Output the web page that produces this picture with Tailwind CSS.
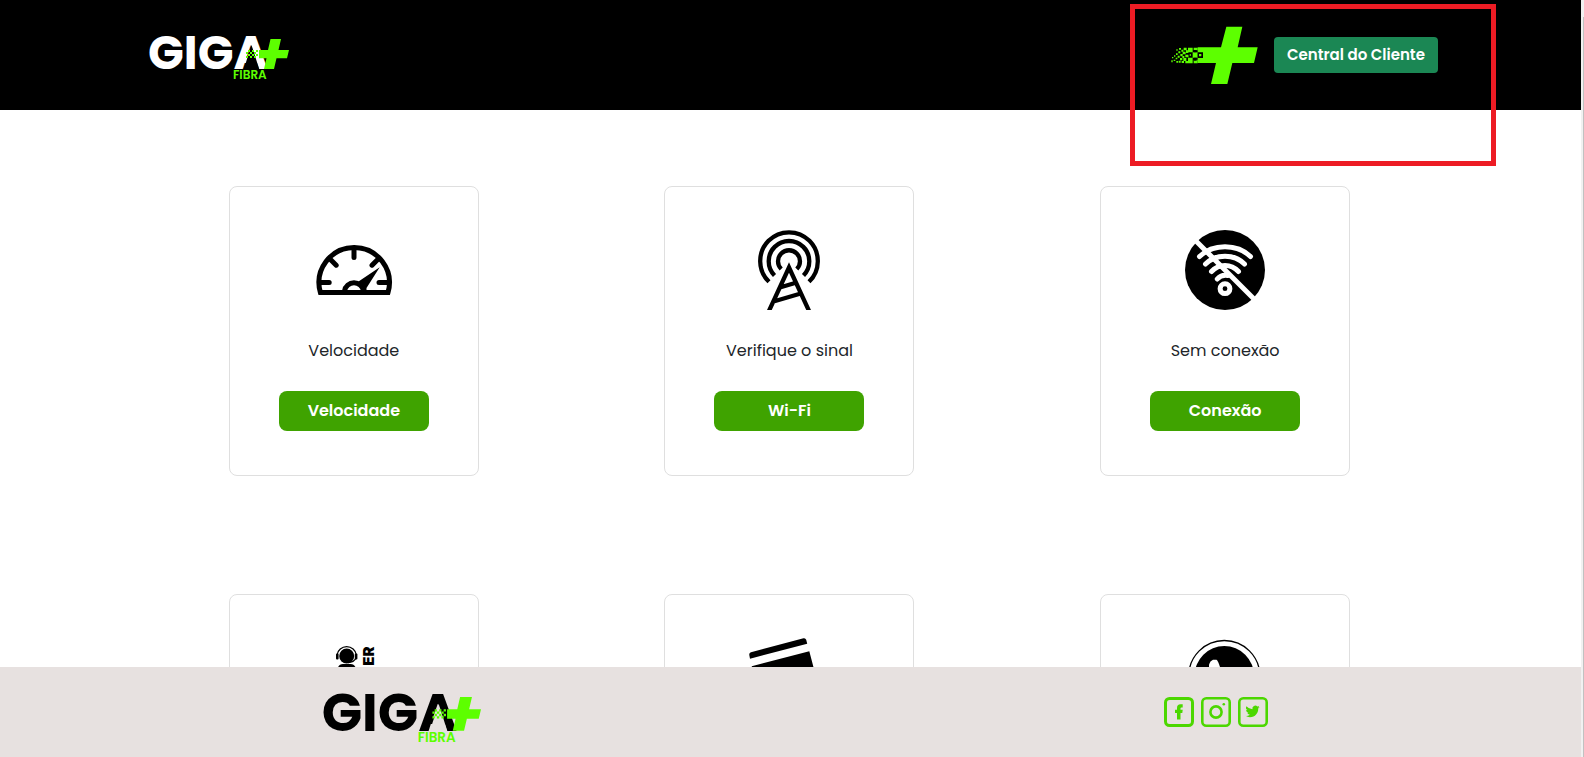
<!DOCTYPE html>
<html lang="pt-BR">
<head>
<meta charset="utf-8">
<meta name="viewport" content="width=device-width, initial-scale=1">
<title>Giga+ Fibra</title>
<script src="https://cdn.jsdelivr.net/npm/@tailwindcss/browser@4"></script>
</head>
<body class="relative flex h-screen overflow-hidden bg-white font-['Poppins','Inter',sans-serif] text-base text-[#212529]">

<!-- Shared logo: lettering in currentColor, A cut-out in the inherited fill -->
<svg class="hidden" aria-hidden="true">
  <symbol id="logo" viewBox="0 0 146 60">
    <text x="5" y="44" font-family="Poppins, Lato, sans-serif" font-weight="700" font-size="47" fill="currentColor">GIGA</text>
    <path d="M108.500 20 100.500 45H116.500Z"/>
    <g fill="#5dff00">
      <path d="M127.500 14H138L135.500 25H146L144 33.300H133.500L131 44H121L123.500 33.300H116V25H125Z"/>
      <path d="M105 25h2v2h-2zM109 25h2v2h-2zM103 27h2v2h-2zM107 27h2v2h-2zM111 27h2v2h-2zM105 29h2v2h-2zM109 29h2v2h-2zM103 31h2v2h-2zM107 31h2v2h-2zM111 31h2v2h-2zM113 25h2v2h-2zM113 29h2v2h-2z"/>
      <text x="90" y="54" font-family="Poppins, Inter, sans-serif" font-weight="600" font-size="12">FIBRA</text>
    </g>
  </symbol>
</svg>

<div class="flex min-w-0 flex-1 flex-col">
  <header class="h-[110px] shrink-0 bg-black">
    <div class="mx-auto flex h-full max-w-[1319px] items-center justify-between px-3">
      <a href="#" aria-label="Giga+ Fibra"><svg class="block h-[60px] w-[146px] fill-black text-white"><use href="#logo"/></svg></a>
      <div class="flex items-center gap-[15px]">
        <svg class="h-[60px] w-[90px]" viewBox="57 30 270 180" aria-hidden="true">
          <path fill="#5dff00" d="M229 35H277L263 97H323L312 144H247L232 207H183L198 144H143V97H213Z"/>
          <path fill="#5dff00" d="M114 98h14v14h-14zM131 98h12v8h-12zM114 128h14v17h-14zM128 112h15v16h-15zM131 134h12v11h-12zM101 98h9v8h-9zM108 106h7v8h-7zM98 110h9v8h-9zM106 119h10v8h-10zM100 129h9v9h-9zM106 138h8v7h-8zM94 104h6v6h-6zM91 117h7v7h-7zM97 123h6v6h-6zM90 129h7v7h-7zM95 138h7v6h-7zM87 99h6v5h-6zM85 109h6v6h-6zM83 122h6v6h-6zM86 137h6v6h-6zM78 115h5v5h-5zM77 128h5v5h-5zM79 138h5v5h-5zM72 121h4v4h-4zM71 134h5v4h-5zM66 126h4v4h-4zM64 136h4v6h-4zM79 103h4v4h-4z"/>
          <path fill="#000" d="M116 115h10v10h-10zM131 105h9v7h-9zM131 128h9v9h-9zM143 112h16v17h-16z"/>
          <path fill="#5dff00" d="M147 117h7v7h-7zM119 118h4v4h-4z"/>
        </svg>
        <button type="button" class="h-9 w-[164px] rounded bg-[#1b8754] text-[15px] font-semibold text-white">Central do Cliente</button>
      </div>
    </div>
  </header>

  <main class="min-h-0 flex-1 overflow-hidden pr-0.5 pt-[76px]">
    <div class="mx-auto grid max-w-[1307px] grid-cols-3 justify-items-center gap-y-[118px]">
      <article class="flex h-[290px] w-[250px] flex-col items-center rounded-lg border border-[#dfdfdf] pt-[43px]">
        <svg class="size-20" viewBox="0 0 80 80" fill="none" stroke="#000" stroke-width="5" aria-hidden="true">
          <path d="M6.400 62.500A35.200 35.200 0 1 1 74 62.500Z"/>
          <path d="M30.500 61a9.600 9.600 0 0 1 19 0"/>
          <path stroke-linecap="round" d="M40 18V27.500M16 29 22.200 35.200M64.200 29 58 35.200M7 52.500H15.200M73 52.500H65"/>
          <path fill="#000" stroke="none" d="M65.700 37.300 44.500 51.500 48 55 49 62H52.500V58Z"/>
        </svg>
        <p class="my-7 leading-[25px]">Velocidade</p>
        <button type="button" class="h-10 w-[150px] rounded-lg bg-[#3fa300] font-semibold text-white">Velocidade</button>
      </article>

      <article class="flex h-[290px] w-[250px] flex-col items-center rounded-lg border border-[#dfdfdf] pt-[43px]">
        <svg class="size-20" viewBox="0 0 80 80" fill="none" stroke="#000" stroke-width="4.300" aria-hidden="true">
          <path d="M20 51.800A28.800 28.800 0 1 1 60 51.800M25.500 45.500A20.300 20.300 0 1 1 54.500 45.500M32.200 39A11 11 0 1 1 47.800 39"/>
          <path d="M19 83 40 37.500 61 83M30 57.700 48.500 52.200M24.500 71.500 53.500 63"/>
        </svg>
        <p class="my-7 leading-[25px]">Verifique o sinal</p>
        <button type="button" class="h-10 w-[150px] rounded-lg bg-[#3fa300] font-semibold text-white">Wi-Fi</button>
      </article>

      <article class="flex h-[290px] w-[250px] flex-col items-center rounded-lg border border-[#dfdfdf] pt-[43px]">
        <svg class="size-20" viewBox="0 0 80 80" fill="none" stroke="#fff" stroke-width="5" stroke-linecap="round" aria-hidden="true">
          <circle cx="40" cy="40" r="40" fill="#000" stroke="none"/>
          <path d="M14.500 26.500C28 13.500 52 13.500 65.500 26.500M20.500 34C31 23.500 49 23.500 59.500 34M26.500 41.500C34 33.500 46 33.500 53.500 41.500M32.300 49C35.500 45 39 44.800 43 45.500"/>
          <path stroke-linecap="butt" d="M10 10 70 70"/>
          <circle cx="40" cy="58.700" r="4.900" fill="#000"/>
        </svg>
        <p class="my-7 leading-[25px]">Sem conexão</p>
        <button type="button" class="h-10 w-[150px] rounded-lg bg-[#3fa300] font-semibold text-white">Conexão</button>
      </article>

      <article class="flex h-[290px] w-[250px] flex-col items-center rounded-lg border border-[#dfdfdf] pt-[43px]">
        <svg class="size-20" viewBox="0 0 80 80" aria-hidden="true">
          <circle cx="32.700" cy="18" r="7.500"/>
          <path fill="none" stroke="#000" stroke-width="1.300" d="M23 17A9.800 9.800 0 0 1 42.400 17M42 20Q40 24.500 34 24.500"/>
          <rect x="22" y="15.500" width="2.600" height="6" rx="1"/>
          <rect x="40.800" y="15.500" width="2.600" height="6" rx="1"/>
          <path d="M23.500 31Q24.500 26 29 26H36.500Q41 26 42 31V60H23.500Z"/>
          <text transform="translate(59.500 8.500) rotate(-90)" text-anchor="end" font-family="Inter, sans-serif" font-weight="900" font-size="15">ER</text>
        </svg>
      </article>

      <article class="flex h-[290px] w-[250px] flex-col items-center rounded-lg border border-[#dfdfdf] pt-[43px]">
        <svg class="size-20" viewBox="0 0 80 80" aria-hidden="true">
          <path d="M1 20.700 0.300 17Q0 14.800 2 14.300L54.500 0.200Q56.500 -0.200 57.200 1.800L58.200 5.800ZM2.700 28.300 60.300 13.300 70 50 12 65Z"/>
        </svg>
      </article>

      <article class="flex h-[290px] w-[250px] flex-col items-center rounded-lg border border-[#dfdfdf] pt-[43px]">
        <svg class="size-20" viewBox="0 0 80 80" aria-hidden="true">
          <circle cx="39.300" cy="38" r="35.500" fill="none" stroke="#000" stroke-width="1.300"/>
          <circle cx="39.300" cy="37.600" r="29.600"/>
          <path fill="#fff" d="M24 30V26.500Q25 23 28 21.700H31.500Q33 22.500 35 29L33 36H26Z"/>
        </svg>
      </article>
    </div>
  </main>

  <footer class="h-[90px] shrink-0 bg-[#e7e1e0]">
    <div class="mx-auto flex h-full max-w-[955px] items-center justify-between">
      <a href="#" aria-label="Giga+ Fibra" class="pt-1.5 pl-[3px]"><svg class="block h-[68px] w-[165px] fill-[#e7e1e0] text-black"><use href="#logo"/></svg></a>
      <nav aria-label="Redes sociais" class="flex gap-[7px]">
        <a href="#" aria-label="Facebook"><svg class="block size-[30px]" viewBox="0 0 30 30" fill="#4cd700"><rect x="1.500" y="1.500" width="27" height="27" rx="4" fill="none" stroke="#4cd700" stroke-width="3"/><path d="M13 22.500V16H11V12.700H13V11Q13 7.300 16.500 7.300H18.700V10.500H17.500Q16.500 10.500 16.500 11.600V12.700H18.700L18.300 16H16.500V22.500Z"/></svg></a>
        <a href="#" aria-label="Instagram"><svg class="block size-[30px]" viewBox="0 0 30 30" fill="none" stroke="#4cd700"><rect x="1.300" y="1.300" width="27.400" height="27.400" rx="4" stroke-width="2.600"/><circle cx="15" cy="15" r="5.600" stroke-width="2.600"/><circle cx="22.800" cy="7.200" r="1.300" fill="#4cd700" stroke="none"/></svg></a>
        <a href="#" aria-label="Twitter"><svg class="block size-[30px]" viewBox="0 0 30 30"><rect x="1.300" y="1.300" width="27.400" height="27.400" rx="4" fill="none" stroke="#4cd700" stroke-width="2.600"/><path fill="#4cd700" transform="translate(7.500 7.300) scale(.59)" d="M23.950 4.570a10 10 0 0 1-2.820.77 4.960 4.960 0 0 0 2.160-2.720 9.900 9.900 0 0 1-3.120 1.190 4.920 4.920 0 0 0-8.380 4.480A13.930 13.930 0 0 1 1.640 3.160a4.920 4.920 0 0 0 1.520 6.570 4.900 4.900 0 0 1-2.230-.61v.060a4.920 4.920 0 0 0 3.950 4.830 5 5 0 0 1-2.210.080 4.940 4.940 0 0 0 4.600 3.420A9.870 9.870 0 0 1 0 19.540a13.940 13.940 0 0 0 7.550 2.210c9.050 0 14-7.500 14-13.980 0-.21 0-.42-.020-.63a9.940 9.940 0 0 0 2.460-2.550z"/></svg></a>
      </nav>
    </div>
  </footer>
</div>

<!-- Scrollbar track and thumb -->
<div class="w-[3px] shrink-0 bg-[#f1f1f1] pt-[17px] pl-0.5" aria-hidden="true"><div class="h-full bg-[#c1c1c1]"></div></div>

<!-- Highlight frame around the customer area -->
<div class="pointer-events-none absolute top-1 right-[88px] h-[162px] w-[366px] border-5 border-[#ed1c24]" aria-hidden="true"></div>
</body>
</html>
